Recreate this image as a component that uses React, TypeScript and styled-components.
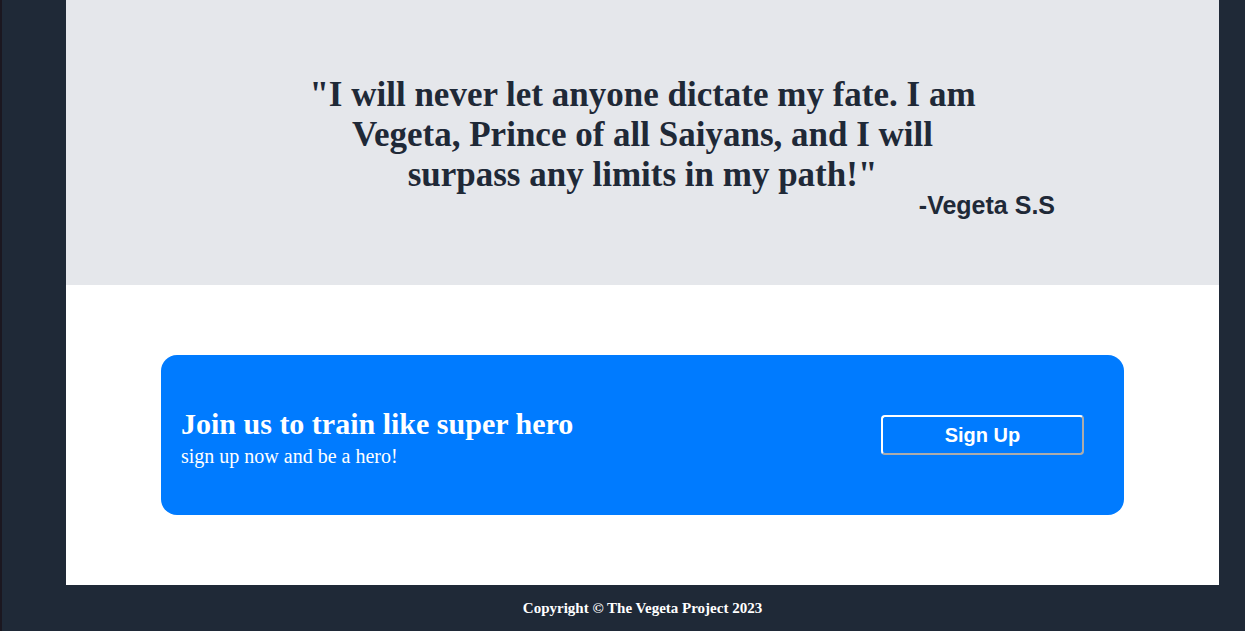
import React from "react";
import styled, { createGlobalStyle } from "styled-components";

const Global = createGlobalStyle`
  html, body { margin: 0; padding: 0; background: #1f2937; }
  body { font-family: "Liberation Serif", "Times New Roman", serif; }
`;

const Page = styled.div`
  min-height: 631px;
  background: #1f2937;
  border-left: 2px solid #1b1720;
  padding: 0 26px 0 64px;
  display: flex;
  flex-direction: column;
`;

const Main = styled.main`
  display: flex;
  flex-direction: column;
`;

const QuoteSection = styled.section`
  background: #e5e7eb;
  height: 285px;
  box-sizing: border-box;
  padding-top: 75px;
  display: flex;
  justify-content: center;
`;

const QuoteBox = styled.div`
  width: 825px;
  display: flex;
  flex-direction: column;
`;

const QuoteText = styled.p`
  margin: 0 auto;
  max-width: 672px;
  text-align: center;
  font-family: "Liberation Serif", "Times New Roman", serif;
  font-weight: 700;
  font-size: 35px;
  line-height: 40px;
  color: #1f2937;
`;

const Author = styled.p`
  margin: -6px 0 0;
  text-align: right;
  font-family: "Liberation Sans", Arial, sans-serif;
  font-weight: 700;
  font-size: 25px;
  line-height: 32px;
  color: #1f2937;
`;

const CtaSection = styled.section`
  background: #ffffff;
  padding: 70px 95px;
`;

const Card = styled.div`
  background: #007bff;
  border-radius: 16px;
  height: 160px;
  box-sizing: border-box;
  padding: 0 40px 0 20px;
  display: flex;
  align-items: center;
  justify-content: space-between;
  color: #ffffff;
`;

const CardText = styled.div`
  display: flex;
  flex-direction: column;
  padding-top: 6px;
`;

const CardTitle = styled.h2`
  margin: 0;
  font-family: "Liberation Serif", "Times New Roman", serif;
  font-weight: 700;
  font-size: 30px;
  line-height: 32px;
`;

const CardSub = styled.p`
  margin: 4px 0 0;
  font-family: "Liberation Serif", "Times New Roman", serif;
  font-size: 20px;
  line-height: 24px;
`;

const SignUp = styled.button`
  width: 203px;
  height: 40px;
  background: transparent;
  border: 2px outset #ffffff;
  border-radius: 4px;
  color: #ffffff;
  font-family: "Liberation Sans", Arial, sans-serif;
  font-weight: 700;
  font-size: 20px;
  cursor: pointer;
`;

const Footer = styled.footer`
  height: 46px;
  display: flex;
  align-items: center;
  justify-content: center;
  color: #ffffff;
  font-family: "Liberation Serif", "Times New Roman", serif;
  font-weight: 700;
  font-size: 15px;
`;

export default function App() {
  return (
    <>
      <Global />
      <Page>
        <Main>
          <QuoteSection>
            <QuoteBox>
              <QuoteText>
                "I will never let anyone dictate my fate. I am Vegeta, Prince of all Saiyans, and I will surpass any limits in my path!"
              </QuoteText>
              <Author>-Vegeta S.S</Author>
            </QuoteBox>
          </QuoteSection>
          <CtaSection>
            <Card>
              <CardText>
                <CardTitle>Join us to train like super hero</CardTitle>
                <CardSub>sign up now and be a hero!</CardSub>
              </CardText>
              <SignUp>Sign Up</SignUp>
            </Card>
          </CtaSection>
        </Main>
        <Footer>Copyright © The Vegeta Project 2023</Footer>
      </Page>
    </>
  );
}
